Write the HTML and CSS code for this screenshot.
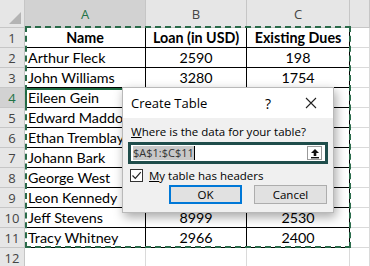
FILE: index.html
```html
<!DOCTYPE html>
<html lang="en">
<head>
  <meta charset="UTF-8">
  <meta name="viewport" content="width=device-width, initial-scale=1.0">
  <title>Create Table</title>
  <link rel="stylesheet" href="styles.css">
</head>
<body>

  <div class="sheet">
    <!-- column headers -->
    <div class="corner"><span class="tri"></span></div>
    <div class="colhead active">A</div>
    <div class="colhead">B</div>
    <div class="colhead">C</div>
    <div class="colhead"></div>

    <div class="rowhead">1</div>
    <div class="cell t bold">Name</div>
    <div class="cell t bold center">Loan (in USD)</div>
    <div class="cell t bold center">Existing Dues</div>
    <div class="cell"></div>

    <div class="rowhead">2</div>
    <div class="cell t">Arthur Fleck</div>
    <div class="cell t center">2590</div>
    <div class="cell t center">198</div>
    <div class="cell"></div>

    <div class="rowhead">3</div>
    <div class="cell t">John Williams</div>
    <div class="cell t center">3280</div>
    <div class="cell t center">1754</div>
    <div class="cell"></div>

    <!-- rows 4-9: the amounts sit under the dialog -->
    <div class="rowhead current">4</div>
    <div class="cell t selected">Eileen Gein</div>
    <div class="cell t"></div>
    <div class="cell t"></div>
    <div class="cell"></div>

    <div class="rowhead">5</div>
    <div class="cell t">Edward Maddox</div>
    <div class="cell t"></div>
    <div class="cell t"></div>
    <div class="cell"></div>

    <div class="rowhead">6</div>
    <div class="cell t">Ethan Tremblay</div>
    <div class="cell t"></div>
    <div class="cell t"></div>
    <div class="cell"></div>

    <div class="rowhead">7</div>
    <div class="cell t">Johann Bark</div>
    <div class="cell t"></div>
    <div class="cell t"></div>
    <div class="cell"></div>

    <div class="rowhead">8</div>
    <div class="cell t">George West</div>
    <div class="cell t"></div>
    <div class="cell t"></div>
    <div class="cell"></div>

    <div class="rowhead">9</div>
    <div class="cell t">Leon Kennedy</div>
    <div class="cell t"></div>
    <div class="cell t"></div>
    <div class="cell"></div>

    <div class="rowhead">10</div>
    <div class="cell t">Jeff Stevens</div>
    <div class="cell t center">8999</div>
    <div class="cell t center">2530</div>
    <div class="cell"></div>

    <div class="rowhead">11</div>
    <div class="cell t">Tracy Whitney</div>
    <div class="cell t center">2966</div>
    <div class="cell t center">2400</div>
    <div class="cell"></div>

    <div class="rowhead">12</div>
    <div class="cell"></div>
    <div class="cell"></div>
    <div class="cell"></div>
    <div class="cell"></div>

    <!-- copy range marquee -->
    <div class="marquee"></div>

    <!-- Create Table dialog -->
    <div class="dialog">
      <div class="dialog-title">
        <span class="title-text">Create Table</span>
        <span class="help">?</span>
        <svg class="close" width="12" height="12" viewBox="0 0 12 12">
          <path d="M1 1 L11 11 M11 1 L1 11" stroke="#222" stroke-width="1.1" fill="none"/>
        </svg>
      </div>
      <div class="dialog-body">
        <div class="prompt"><u>W</u>here is the data for your table?</div>
        <div class="range-box">
          <span class="range-text">$A$1:$C$11</span><span class="caret"></span>
          <span class="collapse-btn">
            <svg width="10" height="11" viewBox="0 0 10 11">
              <path d="M5 1 L9 5 L6.3 5 L6.3 8 L3.7 8 L3.7 5 L1 5 Z" fill="#111"/>
              <rect x="1" y="9" width="8" height="1.4" fill="#111"/>
            </svg>
          </span>
        </div>
        <label class="check-row">
          <span class="checkbox">
            <svg width="11" height="11" viewBox="0 0 11 11">
              <path d="M1.5 5.5 L4.3 8.3 L9.8 2.2" stroke="#222" stroke-width="1.2" fill="none"/>
            </svg>
          </span>
          <span><u>M</u>y table has headers</span>
        </label>
        <div class="buttons">
          <button class="btn default">OK</button>
          <button class="btn">Cancel</button>
        </div>
      </div>
    </div>
  </div>

</body>
</html>
```

FILE: styles.css
```css
body {
  margin: 0;
  padding: 0;
  background-color: #fff;
  font-family: Lato, "Liberation Sans", sans-serif;
}
.sheet {
  position: relative;
  display: grid;
  grid-template-columns: 25px 121px 101px 103px 20px;
  grid-template-rows: 28px repeat(12, 20px);
  width: 370px;
  height: 266px;
  overflow: hidden;
}
.corner, .colhead, .rowhead {
  box-sizing: border-box;
  background-color: #e6e6e6;
  color: #444;
  border-right: 1px solid #c6c6c6;
  border-bottom: 1px solid #c6c6c6;
  display: flex;
  align-items: center;
  justify-content: center;
}
.corner {
  position: relative;
}
.tri {
  position: absolute;
  right: 3px;
  bottom: 3px;
  width: 0;
  height: 0;
  border-left: 12px solid transparent;
  border-bottom: 12px solid #b4b4b4;
}
.colhead {
  font-family: "Open Sans", sans-serif;
  font-size: 13px;
  padding-top: 1px;
}
.colhead.active {
  background-color: #d2d2d2;
  color: #217346;
}
.rowhead {
  font-family: "Open Sans", sans-serif;
  font-size: 13px;
}
.rowhead.current {
  background-color: #d2d2d2;
  color: #217346;
}
.cell {
  box-sizing: border-box;
  border-right: 1px solid #dadada;
  border-bottom: 1px solid #dadada;
  font-size: 14.3px;
  color: #000;
  padding: 0 3px;
  line-height: 19px;
  white-space: nowrap;
  overflow: hidden;
}
.cell.t {
  border-right-color: #000;
  border-bottom-color: #000;
}
.cell.selected {
  box-shadow: inset 0 2px 0 #1e6b41, inset 2px 0 0 #1e6b41;
}
.bold {
  font-weight: bold;
  text-align: center;
}
.center {
  text-align: center;
}
.marquee {
  position: absolute;
  left: 25px;
  top: 26px;
  width: 326px;
  height: 222px;
  box-sizing: border-box;
  border: 2px dashed #2a6b4a;
  pointer-events: none;
}

/* dialog */
.dialog {
  position: absolute;
  left: 122px;
  top: 87px;
  width: 212px;
  height: 126px;
  box-sizing: border-box;
  border: 1px solid #b9b9b9;
  background-color: #f0f0f0;
  box-shadow: 2px 4px 10px rgba(0, 0, 0, 0.35);
  font-family: "Open Sans", "Noto Sans", sans-serif;
  color: #000;
}
.dialog-title {
  height: 30px;
  background-color: #fff;
  display: flex;
  align-items: center;
  padding: 0 0 0 8px;
  font-size: 13px;
}
.title-text {
  flex: 1;
}
.help {
  font-size: 14px;
  margin-right: 34px;
}
.close {
  margin-right: 16px;
}
.dialog-body {
  padding: 6px 5px 0 5px;
  font-size: 11.5px;
}
.prompt {
  padding-left: 3px;
  height: 15px;
  line-height: 15px;
}
.range-box {
  position: relative;
  margin-top: 3px;
  height: 22px;
  box-sizing: border-box;
  border: 3px solid #1f4d4b;
  background-color: #fff;
  display: flex;
  align-items: center;
  padding-left: 2px;
}
.range-text {
  background-color: #c8c8c8;
  color: #333;
  font-size: 11px;
  line-height: 14px;
}
.caret {
  width: 1px;
  height: 14px;
  background-color: #000;
}
.collapse-btn {
  position: absolute;
  right: 3px;
  top: 1px;
  width: 15px;
  height: 14px;
  box-sizing: border-box;
  border: 1px solid #9a9a9a;
  background-color: #fff;
  display: flex;
  align-items: center;
  justify-content: center;
}
.check-row {
  display: flex;
  align-items: center;
  gap: 6px;
  margin-top: 3px;
  padding-left: 2px;
  height: 16px;
}
.checkbox {
  width: 13px;
  height: 13px;
  box-sizing: border-box;
  border: 1px solid #333;
  background-color: #fff;
  display: flex;
  align-items: center;
  justify-content: center;
}
.buttons {
  display: flex;
  justify-content: flex-end;
  gap: 12px;
  margin-top: 2px;
  padding-right: 1px;
}
.btn {
  width: 73px;
  height: 19px;
  box-sizing: border-box;
  border: 1px solid #adadad;
  background-color: #e1e1e1;
  font-family: "Open Sans", "Noto Sans", sans-serif;
  font-size: 11.5px;
  color: #000;
  padding: 0;
}
.btn.default {
  border: 2px solid #0078d7;
}
```
